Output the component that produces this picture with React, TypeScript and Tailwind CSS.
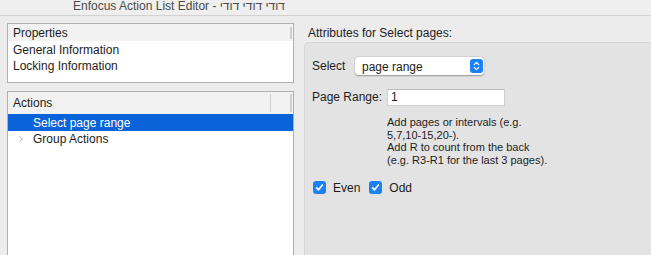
import { ChevronRight } from 'lucide-react';

function Checkbox({ label }: { label: string }) {
  return (
    <label className="flex items-center gap-[7px]">
      <span className="flex h-[13px] w-[13px] items-center justify-center rounded-[3px] bg-[#1b81f6]">
        <svg width="9" height="9" viewBox="0 0 9 9" fill="none">
          <path d="M1.6 4.8 L3.6 6.8 L7.4 2" stroke="white" strokeWidth="1.7" strokeLinecap="round" strokeLinejoin="round" />
        </svg>
      </span>
      <span>{label}</span>
    </label>
  );
}

export default function App() {
  return (
    <div
      className="flex h-[255px] w-[651px] flex-col overflow-hidden bg-[#ececec] text-[12px] text-[#1d1d1d]"
      style={{ fontFamily: '"Liberation Sans", Arial, sans-serif' }}
    >
      {/* title bar */}
      <div className="h-[16px] shrink-0 overflow-hidden border-b border-[#d2d2d2] bg-[#efefef] pl-[73px]">
        <div className="text-[12px] leading-[12px] text-[#4a4a4a]">
          Enfocus Action List Editor - דודי דודי דודי
        </div>
      </div>

      <div className="flex flex-1 pt-[7px]">
        {/* left column */}
        <div className="ml-[7px] flex w-[287px] shrink-0 flex-col gap-[8px]">
          <div className="h-[60px] border border-[#b0b0b0] bg-white">
            <div className="flex h-[17px] items-center justify-between bg-[#f2f2f2] pl-[5px]">
              <span>Properties</span>
              <span className="mr-[1px] h-[12px] w-[2px] bg-[#cfcfcf]" />
            </div>
            <div className="pl-[5px] pt-[1px] leading-[16px]">
              <div>General Information</div>
              <div>Locking Information</div>
            </div>
          </div>

          <div className="flex-1 border border-b-0 border-[#b0b0b0] bg-white">
            <div className="flex h-[22px] items-center bg-[#f2f2f2] pl-[5px]">
              <span className="flex-1">Actions</span>
              <span className="h-[18px] w-px bg-[#d0d0d0]" />
              <span className="w-[19px]" />
              <span className="mr-[1px] h-[18px] w-[2px] bg-[#cfcfcf]" />
            </div>
            <div className="flex h-[17px] items-center bg-[#0a63d8] pl-[25px] text-white">
              Select page range
            </div>
            <div className="flex h-[16px] items-center">
              <ChevronRight className="ml-[8px] h-[10px] w-[10px] text-[#9a9a9a]" strokeWidth={2} />
              <span className="ml-[7px]">Group Actions</span>
            </div>
          </div>
        </div>

        {/* right column */}
        <div className="ml-[10px] flex flex-1 flex-col">
          <div className="ml-[4px] h-[19px] pt-[3px] leading-[14px]">Attributes for Select pages:</div>
          <div className="flex-1 rounded-tl-[5px] border border-r-0 border-b-0 border-[#d6d6d6] bg-[#e3e3e3] pl-[7px] pt-[14px]">
            <div className="flex items-center">
              <span className="w-[43px]">Select</span>
              <div className="flex h-[18px] w-[129px] items-center justify-between rounded-[4px] bg-white pl-[7px] pr-[1px] shadow-[0_0.5px_1.5px_rgba(0,0,0,0.35)]">
                <span className="mt-[1px]">page range</span>
                <span className="flex h-[14px] w-[13px] items-center justify-center rounded-[3px] bg-[#1b81f6]">
                  <svg width="7" height="10" viewBox="0 0 7 10" fill="none">
                    <path d="M1.2 3.6 L3.5 1.4 L5.8 3.6 M1.2 6.4 L3.5 8.6 L5.8 6.4" stroke="white" strokeWidth="1.2" strokeLinecap="round" strokeLinejoin="round" />
                  </svg>
                </span>
              </div>
            </div>

            <div className="mt-[13px] flex items-center">
              <span className="w-[75px]">Page Range:</span>
              <div className="flex h-[17px] w-[118px] items-center border border-[#cfcfcf] border-t-[#bdbdbd] bg-white pl-[3px]">
                1
              </div>
            </div>

            <div className="ml-[75px] mt-[10px] text-[11px] leading-[12.7px]">
              <div>Add pages or intervals (e.g.</div>
              <div>5,7,10-15,20-).</div>
              <div>Add R to count from the back</div>
              <div>(e.g. R3-R1 for the last 3 pages).</div>
            </div>

            <div className="mt-[12px] flex items-center gap-[9px] pl-[1px]">
              <Checkbox label="Even" />
              <Checkbox label="Odd" />
            </div>
          </div>
        </div>
      </div>
    </div>
  );
}
